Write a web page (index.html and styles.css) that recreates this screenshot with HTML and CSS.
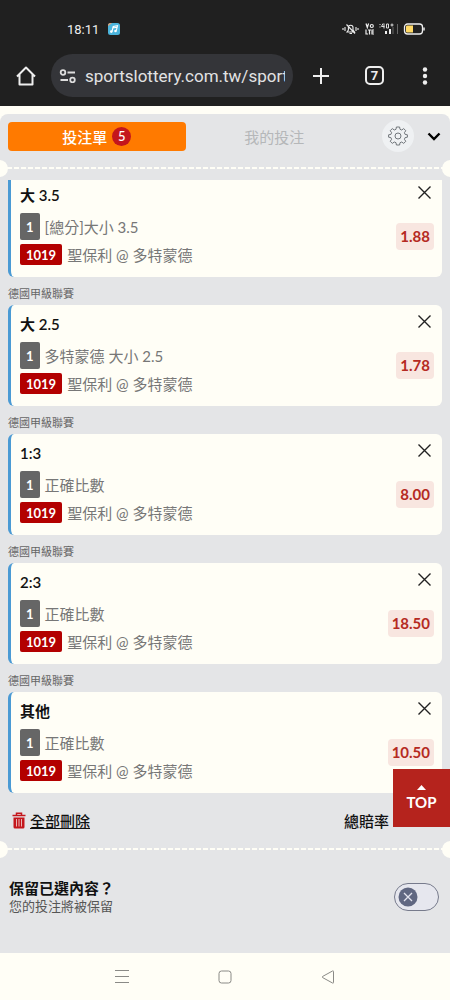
FILE: index.html
```html
<!DOCTYPE html>
<html lang="zh-Hant">
<head>
<meta charset="utf-8">
<meta name="viewport" content="width=device-width, initial-scale=1">
<title>投注單</title>
<link rel="stylesheet" href="styles.css">
</head>
<body>
<header class="browser">
  <div class="status">
    <div class="status-left">
      <span>18:11</span>
      <svg width="12" height="12" viewBox="0 0 12 12"><rect width="12" height="12" rx="2.5" fill="#4bb4dc"/><path d="M0 3V2.5A2.5 2.5 0 0 1 2.500 0H4z" fill="#e8a070"/><path d="M4 8.500 5.200 3.500 9.500 2.800 8.300 7.700M4.500 5l4.500-.8" fill="none" stroke="#fff" stroke-width="1.100"/><circle cx="3.300" cy="8.600" r="1.300" fill="#fff"/><circle cx="7.500" cy="8" r="1.300" fill="#fff"/></svg>
    </div>
    <svg class="status-icons" width="84" height="14" viewBox="0 0 84 14">
      <g fill="none" stroke="#eee" stroke-width="1.100"><path d="M1 6v2M3 5v4M14 5v4M16 6v2M5 10h7.500l-1.500-2V5.500a2.300 2.300 0 0 0-4.600 0V8zM7.500 11.500h2.500M4.500 2.500l8.500 9"/></g>
      <g fill="none" stroke="#eee" stroke-width="1.200"><path d="M24 1.500l1.300 4 1.300-4M24 7.500v4.500h2M26 8h3M27.500 8v4.500M32 8h-2v4h2M30 10h2"/><circle cx="29.800" cy="4" r="1.500"/></g>
      <g fill="none" stroke="#ddd"><path d="M38 2v1M38 4.500v1M41 1.500l-1.500 3h3M42 1.500v5M44.500 2h2v4h-2zM48.500 3h3M50 1.500v3"/></g>
      <path d="M43 9h2v3h-2zM47 7h2v5h-2z" fill="#eee"/><path d="M50.500 5h1v7h-1zM55 2h1v10h-1z" fill="#666"/>
      <rect x="62.500" y="2" width="18" height="10" rx="3" fill="none" stroke="#eee" stroke-width="1.300"/><path d="M65 3.500h6v7h-6a1 1 0 0 1-1-1v-5a1 1 0 0 1 1-1z" fill="#ffd966"/><path d="M82 5.500v3" stroke="#eee" stroke-width="1.500"/>
    </svg>
  </div>
  <div class="toolbar">
    <button class="tool" aria-label="首頁"><svg width="20" height="20" viewBox="0 0 20 20"><path d="M1 10.500 10 1.500l9 9M3.500 8.500V18.500h13V8.500" fill="none" stroke="#eee" stroke-width="2" stroke-linejoin="round"/></svg></button>
    <label class="address">
      <svg width="18" height="14" viewBox="0 0 18 14" fill="none" stroke="#ddd" stroke-width="1.800"><circle cx="4" cy="3.500" r="2.300"/><path d="M8.500 3.500H16M1.500 11H9"/><circle cx="13.500" cy="11" r="2.300"/></svg>
      <input type="text" value="sportslottery.com.tw/sport" aria-label="網址">
    </label>
    <button class="tool" aria-label="新分頁"><svg width="18" height="18" viewBox="0 0 18 18"><path d="M9 1v16M1 9h16" stroke="#eee" stroke-width="2"/></svg></button>
    <button class="tool tabs-count" aria-label="7 個分頁"><span>7</span></button>
    <button class="tool" aria-label="選單"><svg width="6" height="18" viewBox="0 0 6 18" fill="#eee"><circle cx="3" cy="2.500" r="2.200"/><circle cx="3" cy="9" r="2.200"/><circle cx="3" cy="15.500" r="2.200"/></svg></button>
  </div>
</header>

<main class="panel">
  <div class="tabs">
    <button class="tab active">投注單 <span class="count">5</span></button>
    <button class="tab">我的投注</button>
    <button class="gear" aria-label="設定"><svg width="20" height="20" viewBox="0 0 20 20" fill="none" stroke="#71767b" stroke-width="1"><path d="M8.400 1h3.200l.4 2.300 1.700.7 2-1.400 2.100 2.100-1.400 2 .7 1.700 2.300.4v2.400l-2.300.4-.7 1.700 1.400 2-2.100 2.100-2-1.400-1.700.7-.4 2.300H8.400L8 16.700 6.300 16l-2 1.400-2.100-2.100 1.400-2-.7-1.700-2.300-.4V8.800l2.300-.4.700-1.700-1.400-2 2.100-2.100 2 1.400L8 3.300z" stroke-linejoin="round"/><circle cx="10" cy="10" r="3"/></svg></button>
    <button class="collapse" aria-label="收合"><svg width="14" height="9" viewBox="0 0 14 9"><path d="M1.500 1.500 7 7l5.500-5.500" fill="none" stroke="#000" stroke-width="2.400"/></svg></button>
  </div>
  <div class="divider"></div>

  <section class="bets">
    <article class="bet clipped">
      <div class="info">
        <h2>大 3.5</h2>
        <p class="market"><span class="tag">1</span>[總分]大小 3.5</p>
        <p class="match"><span class="tag code">1019</span>聖保利 @ 多特蒙德</p>
      </div>
      <div class="side"><button class="close" aria-label="移除"><svg width="13" height="13" viewBox="0 0 13 13"><path d="M.5.5l12 12M12.500.5l-12 12" stroke="#222" stroke-width="1.400"/></svg></button><span class="odds">1.88</span></div>
    </article>
    <h3>德國甲級聯賽</h3>
    <article class="bet">
      <div class="info">
        <h2>大 2.5</h2>
        <p class="market"><span class="tag">1</span>多特蒙德 大小 2.5</p>
        <p class="match"><span class="tag code">1019</span>聖保利 @ 多特蒙德</p>
      </div>
      <div class="side"><button class="close" aria-label="移除"><svg width="13" height="13" viewBox="0 0 13 13"><path d="M.5.5l12 12M12.500.5l-12 12" stroke="#222" stroke-width="1.400"/></svg></button><span class="odds">1.78</span></div>
    </article>
    <h3>德國甲級聯賽</h3>
    <article class="bet">
      <div class="info">
        <h2>1:3</h2>
        <p class="market"><span class="tag">1</span>正確比數</p>
        <p class="match"><span class="tag code">1019</span>聖保利 @ 多特蒙德</p>
      </div>
      <div class="side"><button class="close" aria-label="移除"><svg width="13" height="13" viewBox="0 0 13 13"><path d="M.5.5l12 12M12.500.5l-12 12" stroke="#222" stroke-width="1.400"/></svg></button><span class="odds">8.00</span></div>
    </article>
    <h3>德國甲級聯賽</h3>
    <article class="bet">
      <div class="info">
        <h2>2:3</h2>
        <p class="market"><span class="tag">1</span>正確比數</p>
        <p class="match"><span class="tag code">1019</span>聖保利 @ 多特蒙德</p>
      </div>
      <div class="side"><button class="close" aria-label="移除"><svg width="13" height="13" viewBox="0 0 13 13"><path d="M.5.5l12 12M12.500.5l-12 12" stroke="#222" stroke-width="1.400"/></svg></button><span class="odds">18.50</span></div>
    </article>
    <h3>德國甲級聯賽</h3>
    <article class="bet">
      <div class="info">
        <h2>其他</h2>
        <p class="market"><span class="tag">1</span>正確比數</p>
        <p class="match"><span class="tag code">1019</span>聖保利 @ 多特蒙德</p>
      </div>
      <div class="side"><button class="close" aria-label="移除"><svg width="13" height="13" viewBox="0 0 13 13"><path d="M.5.5l12 12M12.500.5l-12 12" stroke="#222" stroke-width="1.400"/></svg></button><span class="odds">10.50</span></div>
    </article>
  </section>

  <div class="summary">
    <button class="clear"><svg width="14" height="17" viewBox="0 0 14 17"><path d="M4.500 3V1.200h5V3M.5 3.500h13" fill="none" stroke="#c4161c" stroke-width="1.500"/><path d="M1.500 5.500h11V15a1.500 1.500 0 0 1-1.500 1.500H3A1.500 1.500 0 0 1 1.500 15z" fill="#c4161c"/><path d="M4.500 7v7.500M7 7v7.500M9.500 7v7.500" stroke="#f3dcdc" stroke-width=".8"/></svg><span>全部刪除</span></button>
    <strong>總賠率</strong>
  </div>
  <div class="divider"></div>

  <label class="keep">
    <span class="keep-text"><b>保留已選內容？</b><small>您的投注將被保留</small></span>
    <span class="switch"><input type="checkbox" role="switch"><svg class="knob" width="20" height="20" viewBox="0 0 20 20"><circle cx="10" cy="10" r="9.500" fill="#606781"/><path d="M6 6l8 8M14 6l-8 8" stroke="#e3e4ee" stroke-width="1.300"/></svg></span>
  </label>
</main>

<nav class="system-nav">
  <button aria-label="最近使用"><svg width="14" height="14" viewBox="0 0 14 14"><path d="M0 .5h14M0 6.500h14M0 12.500h14" stroke="#8a8a86"/></svg></button>
  <button aria-label="主畫面"><svg width="14" height="14" viewBox="0 0 14 14"><rect x="1" y="1" width="12" height="12" rx="2.500" fill="none" stroke="#8a8a86"/></svg></button>
  <button aria-label="返回"><svg width="14" height="14" viewBox="0 0 14 14"><path d="M1.500 6.500 11.500 1q1-.5 1 .5v11q0 1-1 .5L1.500 7.500q-.8-.5 0-1z" fill="none" stroke="#8a8a86"/></svg></button>
</nav>
<a class="top" href="#"><svg width="9" height="5" viewBox="0 0 9 5"><path d="M0 5 4.500 0 9 5z" fill="#fff"/></svg>TOP</a>
</body>
</html>
```

FILE: styles.css
```css
* { box-sizing: border-box; }
body {
  margin: 0;
  min-height: 100vh;
  display: flex;
  flex-direction: column;
  background: #fffef6;
  color: #111;
  font-family: Lato, "Noto Sans CJK TC", sans-serif;
  font-size: 15px;
}
h2, h3, p { margin: 0; }
svg { display: block; flex: none; }
button {
  display: flex;
  align-items: center;
  justify-content: center;
  margin: 0;
  padding: 0;
  border: 0;
  background: none;
  color: inherit;
  font: inherit;
}

.browser { background: #202020; color: #eee; font-family: Roboto, sans-serif; padding-bottom: 9px; }
.status { display: flex; justify-content: space-between; align-items: center; padding: 19px 24px 15px 67px; height: 54px; font-size: 13px; }
.status-left { display: flex; align-items: center; gap: 9px; }
.toolbar { display: flex; align-items: center; }
.tool { width: 51px; height: 43px; flex: none; }
.tool:last-child { width: 50px; }
.address {
  flex: 1;
  min-width: 0;
  display: flex;
  align-items: center;
  gap: 8px;
  height: 43px;
  padding: 0 8px;
  border-radius: 22px;
  background: #343539;
}
.address input {
  flex: 1;
  min-width: 0;
  padding: 0;
  border: 0;
  background: none;
  color: #e2e2e3;
  font: 17px Roboto, sans-serif;
}
.toolbar .tool:nth-of-type(2) { width: 56px; }
.tabs-count span { width: 19px; height: 19px; border: 2px solid #eee; border-radius: 5px; font: 700 13px/15px Roboto, sans-serif; }

.panel { flex: 1; margin-top: 8px; border-radius: 8px 8px 0 0; background: #e4e5e7; }
.tabs { display: flex; align-items: center; padding: 6px 8px 0; }
.tab { flex: 1; height: 29px; border-radius: 4px; color: #b5b7b9; }
.active { background: #ff7a00; color: #fff; gap: 5px; font-weight: 500; }
.count { width: 19px; height: 19px; border-radius: 50%; background: #c4161c; font-size: 13px; line-height: 19px; }
.gear { width: 32px; height: 32px; margin-left: 19px; border-radius: 50%; background: #eff1f3; }
.collapse { width: 16px; height: 32px; margin-left: 12px; }

.divider {
  display: flex;
  align-items: center;
  justify-content: space-between;
  height: 18px;
  margin-top: 7px;
  overflow: hidden;
  background: repeating-linear-gradient(90deg, #fffef6 0 5px, transparent 5px 7px) center / 100% 2px no-repeat;
}
.divider::before, .divider::after { content: ""; width: 17px; height: 17px; border-radius: 50%; background: #fffef6; margin: 0 -9px; }

.bets { padding: 3px 8px 0; }
.bet {
  display: flex;
  justify-content: space-between;
  height: 101px;
  padding: 9px 8px 0 9px;
  border-left: 3px solid #4a9ad4;
  border-radius: 6px;
  background: #fffef6;
}
.clipped { height: 97px; padding-top: 5px; border-radius: 0 0 6px 6px; }
.bet h2 { height: 28px; font-size: 15px; line-height: 20px; font-weight: 600; }
.bet p { display: flex; align-items: center; gap: 5px; color: #777; }
.market { height: 27px; margin-bottom: 4px; }
.match { height: 21px; }
.tag {
  align-self: stretch;
  display: flex;
  align-items: center;
  padding: 0 6px;
  border-radius: 2px;
  background: #666;
  color: #fff;
  font-size: 13px;
  font-weight: 700;
}
.code { background: #b30000; }
.side { display: flex; flex-direction: column; align-items: flex-end; gap: 24px; padding-top: 1px; }
.close { width: 19px; height: 13px; }
.odds { padding: 0 4px; border-radius: 4px; background: #f8e6e0; color: #b52a22; font-size: 15px; line-height: 27px; font-weight: 700; }
.bets h3 { height: 28px; color: #666; font-size: 11px; line-height: 33px; font-weight: 400; }

.summary { display: flex; justify-content: space-between; align-items: center; height: 47px; padding: 7px 61px 0 12px; }
.clear { gap: 4px; }
.clear span { text-decoration: underline; text-decoration-skip-ink: none; font-weight: 500; }
.summary strong { font-weight: 500; }
.summary + .divider { margin-top: 0; }

.keep { display: flex; justify-content: space-between; align-items: center; padding: 20px 11px 0 9px; }
.keep-text { display: flex; flex-direction: column; }
.keep b { line-height: 20px; font-weight: 600; }
.keep small { font-size: 13px; line-height: 17px; color: #555; }
.switch { position: relative; display: flex; }
.switch input { appearance: none; width: 45px; height: 28px; margin: 0; border: 1px solid #777b8c; border-radius: 14px; background: #e6e7ee; }
.knob { position: absolute; left: 4px; top: 4px; }

.system-nav { display: flex; justify-content: center; gap: 75px; height: 47px; }
.system-nav button { width: 28px; }
.top {
  position: fixed;
  right: 0;
  bottom: 173px;
  width: 57px;
  height: 58px;
  display: flex;
  flex-direction: column;
  align-items: center;
  justify-content: center;
  gap: 3px;
  background: #b5231d;
  color: #fff;
  font-size: 15px;
  font-weight: 700;
  text-decoration: none;
}
```
